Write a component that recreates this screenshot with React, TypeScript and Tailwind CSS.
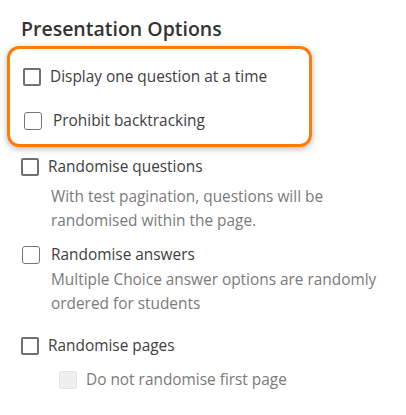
import React from "react";

// ── Checkbox ──────────────────────────────────────────────────────────────────

function Box({ thin = false, disabled = false }: { thin?: boolean; disabled?: boolean }) {
  if (disabled) {
    return <span className="w-[18px] h-[18px] shrink-0 rounded-[3px] border border-[#e2e2e2] bg-[#eeeeee]" />;
  }
  return (
    <span
      className={
        thin
          ? "w-[18px] h-[18px] shrink-0 rounded-[3px] border border-[#757575] bg-white"
          : "w-[18px] h-[18px] shrink-0 rounded-[2px] border-2 border-[#707070] bg-white"
      }
    />
  );
}

function Option({
  label,
  thin,
  disabled,
  className,
}: {
  label: string;
  thin?: boolean;
  disabled?: boolean;
  className?: string;
}) {
  return (
    <div className={"flex items-center h-[18px] " + (className ?? "")}>
      <Box thin={thin} disabled={disabled} />
      <span
        className={
          (thin ? "ml-[11px] " : "ml-[9px] ") +
          "text-[15.4px] leading-none " +
          (disabled ? "text-[#7a7a7a]" : "text-[#404040]")
        }
      >
        {label}
      </span>
    </div>
  );
}

function Hint({ children }: { children: React.ReactNode }) {
  return <p className="ml-[30px] text-[15.4px] leading-[24px] text-[#7a7a7a]">{children}</p>;
}

export default function App() {
  return (
    <div
      className="w-[406px] h-[415px] bg-white overflow-hidden pl-[21px] pt-[15px]"
      style={{ fontFamily: '"Open Sans", "Noto Sans", sans-serif' }}
    >
      <h2 className="text-[19.5px] leading-[27px] font-semibold text-[#333333]">Presentation Options</h2>

      {/* highlighted group */}
      <div className="mt-[4px] -ml-[14px] w-[305px] h-[101px] rounded-[12px] border-[3px] border-[#fb7c0e] shadow-[0_2px_6px_rgba(0,0,0,0.28)] pl-[13px] pt-[19px]">
        <Option label="Display one question at a time" />
        <Option label="Prohibit backtracking" thin className="mt-[26px] ml-[1px]" />
      </div>

      <div className="mt-[11px]">
        <Option label="Randomise questions" />
        <div className="mt-[9px]">
          <Hint>With test pagination, questions will be</Hint>
          <Hint>randomised within the page.</Hint>
        </div>
      </div>

      <div className="mt-[13px] ml-[1px]">
        <Option label="Randomise answers" thin />
        <div className="mt-[4px] -ml-[1px]">
          <Hint>Multiple Choice answer options are randomly</Hint>
          <Hint>ordered for students</Hint>
        </div>
      </div>

      <div className="mt-[21px]">
        <Option label="Randomise pages" />
        <Option label="Do not randomise first page" disabled className="mt-[16px] ml-[38px]" />
      </div>
    </div>
  );
}
